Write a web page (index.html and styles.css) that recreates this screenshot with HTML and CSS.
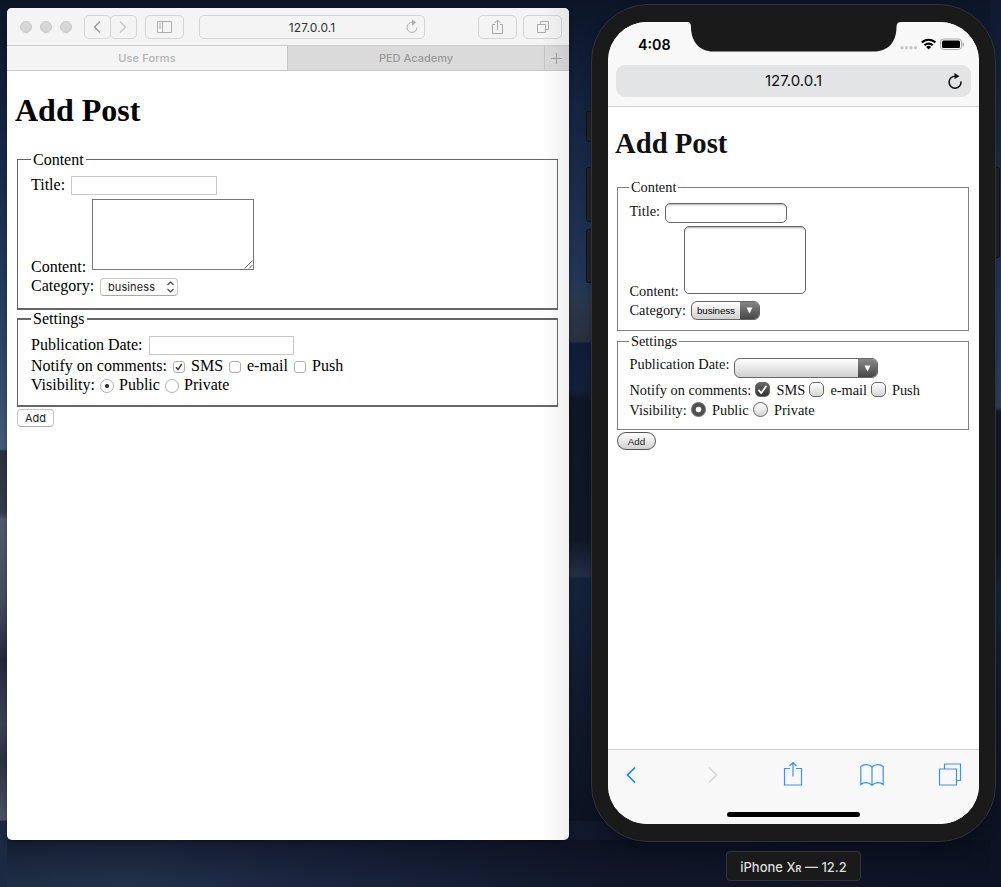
FILE: index.html
```html
<!DOCTYPE html>
<html lang="en">
<head>
<meta charset="utf-8">
<title>Use Forms</title>
<link rel="stylesheet" href="styles.css">
</head>
<body>
<div class="desktop">
  <section class="browser">
    <header class="toolbar">
      <div class="lights"><i></i><i></i><i></i></div>
      <div class="nav">
        <span class="btn"><svg width="26" height="24"><path d="M16 6.500 L10.500 12 L16 17.500" stroke="#949494" stroke-width="1.300"/></svg></span>
        <span class="btn"><svg width="26" height="24"><path d="M10 6.500 L15.500 12 L10 17.500" stroke="#c4c4c4" stroke-width="1.300"/></svg></span>
      </div>
      <span class="btn sidebar"><svg width="39" height="24"><path d="M12.500 6.500h14v11h-14zM17.500 6.500v11M14 9h2M14 11h2M14 13h2" stroke="#acacac"/></svg></span>
      <div class="btn address"><span>127.0.0.1</span><svg class="reload" width="14" height="16"><path d="M7.500 3.500 A5 5 0 1 0 12 8.500" stroke="#acacac"/><path d="M7 .5 L11 3.500 L7 6.500z" fill="#acacac"/></svg></div>
      <span class="btn share"><svg width="39" height="24"><path d="M17 9.500h-2.500v9h10v-9h-2.500M19.500 15V5M16.500 8l3-3 3 3" stroke="#a8a8a8"/></svg></span>
      <span class="btn tabsbtn"><svg width="39" height="24"><path d="M14.500 9.500h8v8h-8zM17.500 9.500v-3h8v8h-3" stroke="#acacac"/></svg></span>
    </header>
    <nav class="tabs">
      <span class="tab active">Use Forms</span>
      <span class="tab">PED Academy</span>
      <span class="plus"><svg width="24" height="24"><path d="M11.500 7v11M6 12.500h11" stroke="#a2a2a2"/></svg></span>
    </nav>
    <main class="page">
      <h1>Add Post</h1>
      <fieldset class="content">
        <legend>Content</legend>
        <div class="row r-title"><label>Title:</label><span class="input"></span></div>
        <div class="row r-content"><label>Content:</label><span class="area"><svg width="9" height="9"><path d="M.5 8.500l8-8M5 8.500l3.500-3.500" stroke="#666"/></svg></span></div>
        <div class="row r-category"><label>Category:</label><span class="select"><span>business</span><svg width="9" height="14"><path d="M1.500 5l3-3 3 3M1.500 9l3 3 3-3" stroke="#444" stroke-width="1.200"/></svg></span></div>
      </fieldset>
      <fieldset class="settings">
        <legend>Settings</legend>
        <div class="row r-date"><label>Publication Date:</label><span class="input"></span></div>
        <div class="row r-notify"><label>Notify on comments:</label><span class="check"><svg width="12" height="12"><path d="M3 6.200L5 8.600L8.800 3" stroke="#3c3c3c" stroke-width="1.500"/></svg></span><label>SMS</label><span class="check"></span><label>e-mail</label><span class="check"></span><label>Push</label></div>
        <div class="row r-vis"><label>Visibility:</label><span class="radio on"></span><label>Public</label><span class="radio"></span><label>Private</label></div>
      </fieldset>
      <span class="submit">Add</span>
    </main>
  </section>

  <i class="key key-mute"></i><i class="key key-up"></i><i class="key key-down"></i><i class="key key-power"></i>
  <section class="phone">
    <div class="screen">
      <svg class="notch" width="214" height="30"><path d="M0 0C3 0 4 1.500 4 5C4 20 13 29.500 26 29.500H187C201 29.500 209.500 20 209.500 5C209.500 1.500 211 0 214 0z" fill="#1a1a1a"/></svg>
      <header class="phone-head">
        <div class="status"><b>4:08</b>
          <svg width="64" height="16">
            <g fill="#c9c9c9"><circle cx="2" cy="9.800" r="1.700"/><circle cx="6.500" cy="9.800" r="1.700"/><circle cx="11" cy="9.800" r="1.700"/><circle cx="15.500" cy="9.800" r="1.700"/></g>
            <g stroke="#000" stroke-width="2.100"><path d="M21.800 4.600A9.500 9.500 0 0 1 35.400 4.600M24.500 7.300A5.800 5.800 0 0 1 32.700 7.300"/></g><path d="M28.600 11.500L26.100 9A3.600 3.600 0 0 1 31.100 9z" fill="#000"/>
            <rect x="40.500" y="1" width="21" height="10.500" rx="3" stroke="#aaa"/><rect x="42" y="2.500" width="18" height="7.500" rx="1.500" fill="#000"/><path d="M62.500 4.500v4a2 2 0 0 0 0-4z" fill="#aaa"/>
          </svg>
        </div>
        <div class="phone-address"><span>127.0.0.1</span><svg width="16" height="18"><path d="M8.500 4.200A6 6 0 1 0 14 9.500" stroke="#111" stroke-width="1.600"/><path d="M7.500 1L12.500 4.200L7.500 7z" fill="#111"/></svg></div>
      </header>
      <main class="page mobile">
        <h1>Add Post</h1>
        <fieldset class="content">
          <legend>Content</legend>
          <div class="row r-title"><label>Title:</label><span class="input"></span></div>
          <div class="row r-content"><label>Content:</label><span class="area"></span></div>
          <div class="row r-category"><label>Category:</label><span class="select"><span>business</span><em><svg width="7" height="7"><path d="M.5 .5h6l-3 6z" fill="#fff"/></svg></em></span></div>
        </fieldset>
        <fieldset class="settings">
          <legend>Settings</legend>
          <div class="row r-date"><label>Publication Date:</label><span class="select"><span></span><em><svg width="7" height="7"><path d="M.5 .5h6l-3 6z" fill="#fff"/></svg></em></span></div>
          <div class="row r-notify"><label>Notify on comments:</label><span class="check on"><svg width="13" height="13"><path d="M2.500 6.800L5.200 10L10.500 2.800" stroke="#fff" stroke-width="1.800"/></svg></span><label>SMS</label><span class="check"></span><label>e-mail</label><span class="check"></span><label>Push</label></div>
          <div class="row r-vis"><label>Visibility:</label><span class="radio on"></span><label>Public</label><span class="radio"></span><label>Private</label></div>
        </fieldset>
        <span class="submit">Add</span>
      </main>
      <footer class="phone-foot">
        <div class="actions">
          <svg width="12" height="26"><path d="M10 6.500L2.500 14L10 21.500" stroke="#157efb" stroke-width="1.600"/></svg>
          <svg width="12" height="26"><path d="M2 6.500L9.500 14L2 21.500" stroke="#d5d5d5" stroke-width="1.500"/></svg>
          <svg width="20" height="26"><path d="M7 7.500H1.500v16.500h17v-16.500H13M10 15.500V1.500M6.500 5L10 1.500L13.500 5" stroke="#3b91f8" stroke-width="1.200"/></svg>
          <svg width="24" height="26"><path d="M12 6C9.500 3 3.500 3 .8 5.500V23.500C3.500 20.800 9.500 20.800 12 24.500C14.500 20.800 20.500 20.800 23.200 23.500V5.500C20.500 3 14.500 3 12 6zM12 6V24.500" stroke="#3b91f8" stroke-width="1.200"/></svg>
          <svg width="24" height="26"><path d="M1.500 8h17v16h-17zM6.500 8V3h16v16.500h-4" stroke="#3b91f8" stroke-width="1.200"/></svg>
        </div>
        <i class="home"></i>
      </footer>
    </div>
  </section>
  <div class="device">iPhone X<small>R</small> — 12.2</div>
</div>
</body>
</html>
```
FILE: styles.css
```css
* { box-sizing: border-box; }
body { margin: 0; }
svg { display: block; fill: none; flex: none; }
i, em { font-style: normal; display: block; }
.desktop {
  position: relative; width: 1001px; height: 887px; overflow: hidden;
  font-family: Inter, "Liberation Sans", sans-serif;
  background:
    linear-gradient(180deg, #0c1528 0, #14233e 110px, #1f3557 250px, #324a6c 380px, #445a78 449px, #2b3142 451px, #343b4e 513px, #52596e 520px, #454b61 600px, #26293c 660px, #3c4258 725px, #2b2f43 760px, #4c5268 820px, #1b2a42 821px) 0 0 / 7px 887px no-repeat,
    linear-gradient(180deg, #10192d 0, #16243f 100px, #223658 280px, #2f4162 407px, #11182b 412px, #101828 540px, #14243c 590px, #10182a 720px, #0d1324 821px) 990px 0 / 11px 887px no-repeat,
    linear-gradient(180deg, rgba(8,12,24,.45), transparent 40px) 0 840px / 1001px 47px no-repeat,
    linear-gradient(90deg, #1e2c44 0, #22304a 130px, #1a2540 300px, #101729 600px, #0d1324 1001px) 0 821px / 1001px 66px no-repeat,
    linear-gradient(180deg, #0c1528 0, #14233e 100px, #223658 280px, #29394f 296px, #2b3040 342px, #101d3a 343px, #13203c 390px, #0f1626 400px, #101828 540px, #252f45 576px, #14243c 578px, #10182a 720px, #0d1324 821px);
}
.browser {
  position: absolute; left: 7px; top: 8px; width: 562px; height: 832px;
  background: #fff; border-radius: 5px; overflow: hidden; box-shadow: 0 2px 5px rgba(0,0,0,.3);
}
.browser::after {
  content: ""; position: absolute; inset: 0 0 0 auto; width: 28px;
  background: linear-gradient(90deg, transparent, rgba(0,0,0,.06));
}
.toolbar { display: flex; align-items: center; height: 37px; padding-left: 13px; background: #f4f4f4; }
.btn { display: flex; height: 24px; border: 1px solid #d5d5d5; border-radius: 5px; }
.btn > svg { margin: -1px; }
.lights { display: flex; gap: 8px; width: 64px; }
.lights i { width: 12px; height: 12px; border-radius: 50%; background: #d7d7d7; border: 1px solid #cbcbcb; }
.nav { display: flex; width: 61px; }
.nav .btn { width: 27px; }
.nav .btn + .btn { margin-left: -1px; }
.sidebar, .share, .tabsbtn { width: 39px; }
.address { position: relative; width: 226px; margin-left: 15px; padding-top: 1px; justify-content: center; align-items: center; font-size: 12px; letter-spacing: .1px; color: #333; }
.address .reload { position: absolute; right: 6px; top: 4px; }
.share { margin-left: 53px; }
.tabsbtn { margin-left: 6px; }
.tabs { display: flex; height: 26px; border: solid #cacaca; border-width: 1px 0; background: #dadada; font-size: 11px; letter-spacing: .2px; color: #999; }
.tab { width: 256px; display: flex; align-items: center; justify-content: center; font-weight: 500; letter-spacing: 0; }
.tab.active { width: 281px; background: #f4f4f4; border-right: 1px solid #c5c5c5; color: #b2b2b2; letter-spacing: .15px; }
.plus { border-left: 1px solid #c5c5c5; }

.page { padding: 21px 10px 0; font: 16px/18px "Liberation Serif", serif; color: #000; }
.page h1 { margin: 0 -2px; height: 59px; font-size: 32px; line-height: 37px; }
.page fieldset { margin: 0; padding: 8px 13px 0; min-width: 0; width: 541px; height: 159px; border: solid #666; border-width: 1px 1px 2px; }
.page fieldset.settings { height: 97px; border-top-width: 2px; }
.page legend { padding: 0 2px; height: 18px; }
.page .content legend { height: 17px; }
.row { display: grid; align-items: start; white-space: nowrap; }
.row label { display: block; }
.r-title { grid-template-columns: 40px 146px; height: 23px; }
.input { height: 19px; border: 1px solid #c9c9c9; background: #fff; }
.r-content { grid-template-columns: 61px 162px; height: 78px; }
.r-content label { padding-top: 59px; }
.area { height: 71px; border: 1px solid #777; display: flex; align-items: flex-end; justify-content: flex-end; }
.r-category { grid-template-columns: 69px 78px; height: 19px; }
.select { display: flex; align-items: center; justify-content: space-between; height: 18px; margin-top: 1px; padding: 0 2px 0 7px; border: 1px solid #c6c6c6; border-bottom-color: #aaa; border-radius: 4px; font: 11px Inter, sans-serif; letter-spacing: .1px; color: #222; }
.r-date { grid-template-columns: 118px 145px; height: 21px; }
.r-notify { grid-template-columns: 142px 18px 38px 18px 47px 18px auto; height: 19px; }
.check { width: 12px; height: 12px; margin-top: 4px; border: 1px solid #b0b0b0; border-radius: 3px; background: #fff; }
.check svg { margin: -1px; }
.r-vis { grid-template-columns: 69px 19px 46px 19px auto; }
.radio { width: 14px; height: 14px; margin-top: 3px; border: 1px solid #b0b0b0; border-radius: 50%; background: #fff; }
.radio.on { background: radial-gradient(circle, #333 0 1.700px, #fff 2.400px); }
.submit { display: flex; align-items: center; justify-content: center; width: 37px; height: 18px; margin-top: 2px; border: 1px solid #c6c6c6; border-bottom-color: #aaa; border-radius: 4px; font: 11px Inter, sans-serif; color: #222; }

.key { position: absolute; left: 586px; width: 8px; background: #242424; border: 1px solid #151515; border-radius: 2px; }
.key-mute { top: 111px; height: 31px; }
.key-up { top: 167px; height: 55px; }
.key-down { top: 229px; height: 54px; }
.key-power { left: 992px; top: 167px; height: 91px; }
.phone { position: absolute; left: 591px; top: 4px; width: 405px; height: 838px; padding: 17px 16px; background: #1a1a1a; border: 1px solid #2e323b; border-radius: 57px; box-shadow: 0 6px 14px rgba(0,0,0,.25); }
.screen { position: relative; display: flex; flex-direction: column; width: 371px; height: 802px; background: #fff; border-radius: 39px; overflow: hidden; }
.notch { position: absolute; left: 79px; top: 0; }
.phone-head { height: 85px; padding: 14px 8px 0; background: #f8f8f8; border-bottom: 1px solid #d0d0d2; }
.status { display: flex; justify-content: space-between; height: 29px; padding: 1px 7px 0 22px; }
.status b { font-size: 14.300px; font-weight: 600; line-height: 16px; }
.status svg { margin-top: 1px; }
.phone-address { position: relative; display: flex; align-items: center; justify-content: center; height: 32px; padding-bottom: 1px; background: #e3e4e6; border-radius: 9px; font-size: 15px; color: #111; }
.phone-address svg { position: absolute; right: 8px; top: 7px; }

.page.mobile { flex: 1; padding: 20px 9px 0; font-size: 14.340px; line-height: 16px; color: #111; }
.mobile h1 { height: 52px; font-size: 28.700px; line-height: 32px; }
.mobile fieldset { width: 352px; height: 152px; padding: 8px 11.500px 0; border: 1px solid #808080; }
.mobile fieldset.settings { height: 97px; margin-top: 2px; padding-top: 7px; border-top-width: 1px; }
.page.mobile legend { height: 16px; padding: 0 2px; margin-left: -.5px; }
.mobile .r-title { grid-template-columns: 35.400px 122px; height: 23px; }
.mobile .input, .mobile .area { border: 1px solid #666; border-radius: 5px; box-shadow: inset 0 2px 2px -1px #aaa; }
.mobile .input { height: 20px; }
.mobile .r-content { grid-template-columns: 54.500px 121.500px; height: 75px; }
.mobile .r-content label { padding-top: 57px; }
.mobile .area { height: 68px; }
.mobile .r-category { grid-template-columns: 61.500px 68.500px; }
.mobile .r-category label { padding-top: 1px; }
.mobile .select { height: 19px; margin: 0; padding: 0 0 0 5px; overflow: hidden; border-color: #666; border-radius: 6px; background: linear-gradient(#fff, #d0d0d0); font-size: 9.800px; letter-spacing: -.1px; font-family: "Liberation Sans", sans-serif; color: #000; }
.mobile .select em { display: flex; align-items: center; justify-content: center; width: 19px; height: 19px; background: linear-gradient(#888, #444); }
.mobile .r-date { grid-template-columns: 104.900px 144px; height: 26px; }
.mobile .r-date .select { height: 20px; margin-top: 2px; }
.mobile .r-notify { grid-template-columns: 125.400px 21.600px 33px 21px 40.500px 21px auto; height: 20px; }
.mobile .check, .mobile .radio { width: 15px; height: 15px; margin: 0; border-color: #666; background: linear-gradient(#fff, #d5d5d5); }
.mobile .check { border-radius: 5px; }
.mobile .check.on { background: linear-gradient(#666, #333); }
.mobile .check svg { margin: 0; }
.mobile .r-vis { grid-template-columns: 61.500px 21px 41px 21px auto; }
.mobile .radio.on { background: radial-gradient(circle, #fff 0 2.500px, #505050 3.200px); }
.mobile .submit { width: 39px; height: 18px; border-color: #555; border-radius: 10px; background: linear-gradient(#fff, #d0d0d0); font: 9.800px "Liberation Sans", sans-serif; }

.phone-foot { height: 75px; padding-top: 11px; background: #f8f8f8; border-top: 1px solid #d0d0d2; }
.actions { display: grid; grid-template-columns: 82px 76px 77px 78px 24px; padding-left: 17px; }
.home { width: 133px; height: 5px; margin: 25px 0 0 119px; border-radius: 3px; background: #000; }
.device { position: absolute; left: 726px; top: 851px; width: 135px; height: 30px; border: 1px solid #30343d; border-radius: 4px; background: #1a1a1a; color: #ddd; font-size: 13px; font-weight: 500; line-height: 31px; text-align: center; white-space: nowrap; }
.device small { font-size: 9px; font-weight: 700; }
```
